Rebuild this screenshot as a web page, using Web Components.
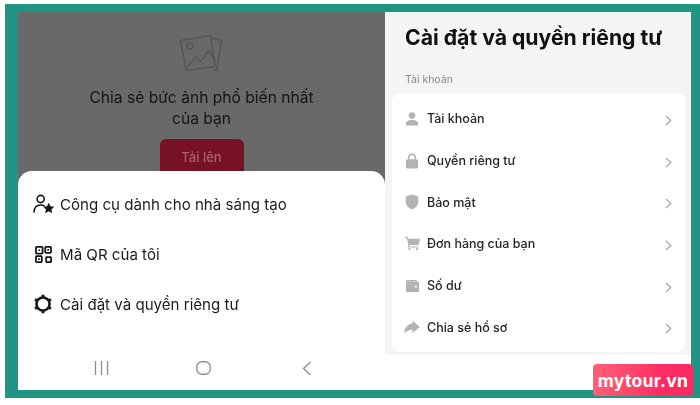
<!DOCTYPE html>
<html lang="vi">
<head>
<meta charset="utf-8">
<title>Cài đặt và quyền riêng tư</title>
<style>
    html, body { margin: 0; padding: 0; background: #fff; }
    body { width: 700px; height: 405px; overflow: hidden; font-family: Inter, "Noto Sans", sans-serif; }
</style>
</head>
<body>
<shot-frame>
    <upload-panel slot="left">
        <menu-row icon="creator">Công cụ dành cho nhà sáng tạo</menu-row>
        <menu-row icon="qr">Mã QR của tôi</menu-row>
        <menu-row icon="gear">Cài đặt và quyền riêng tư</menu-row>
    </upload-panel>
    <settings-panel slot="right" heading="Cài đặt và quyền riêng tư" label="Tài khoản">
        <settings-row icon="person">Tài khoản</settings-row>
        <settings-row icon="lock">Quyền riêng tư</settings-row>
        <settings-row icon="shield">Bảo mật</settings-row>
        <settings-row icon="cart">Đơn hàng của bạn</settings-row>
        <settings-row icon="wallet">Số dư</settings-row>
        <settings-row icon="share">Chia sẻ hồ sơ</settings-row>
    </settings-panel>
</shot-frame>
<brand-badge>mytour.vn</brand-badge>

<script>
const ICONS = {
    creator: `<svg width="22" height="22" viewBox="0 0 22 22" fill="none" stroke="#161616" stroke-width="1.6" stroke-linecap="round">
        <circle cx="8.700" cy="6" r="3.600"/>
        <path d="M2 19c.3-4.600 3-7 6.800-7 1.300 0 2.400.3 3.300.7"/>
        <path d="M16.700 9.700l1.700 3.600 3.800.5-2.800 2.600.8 3.800-3.500-1.900-3.500 1.900.8-3.800-2.800-2.600 3.800-.5z" fill="#161616" stroke="none"/>
    </svg>`,
    qr: `<svg width="17" height="17" viewBox="0 0 18 18" fill="none" stroke="#161616" stroke-width="1.900">
        <rect x="1" y="1" width="7" height="7" rx=".8"/>
        <rect x="10.800" y="1" width="6.200" height="6.200" rx=".8"/>
        <rect x="1" y="10.800" width="6.200" height="6.200" rx=".8"/>
        <rect x="11.800" y="11.800" width="5.200" height="5.200" rx=".6"/>
        <path d="M3.600 4.500h1.800M13 4.100h1.800M3.200 13.900h1.800" stroke-width="1.700"/>
    </svg>`,
    gear: `<svg width="20" height="20" viewBox="0 0 18 18" fill="none" stroke="#161616">
        <circle cx="9" cy="9" r="5.900" stroke-width="2.300"/>
        <path d="M9 .7v2.500M16.200 4.850l-2.200 1.250M16.200 13.150l-2.200-1.250M9 17.300v-2.500M1.800 13.150l2.200-1.250M1.800 4.850l2.200 1.250" stroke-width="2.500"/>
    </svg>`,
    person: `<svg width="14" height="14" viewBox="0 0 14 14" fill="#b3b3b3">
        <circle cx="7" cy="3.600" r="3.300"/>
        <path d="M.8 13.600v-1.800c0-2.400 2.800-3.800 6.200-3.800s6.200 1.400 6.200 3.800v1.800z"/>
    </svg>`,
    lock: `<svg width="14" height="16" viewBox="0 0 14 16" fill="#b3b3b3">
        <path d="M3 6.500V4.600a4 4 0 0 1 8 0v1.900H9.500V4.600a2.500 2.500 0 0 0-5 0v1.900z"/>
        <rect x="1" y="6.200" width="12" height="9.200" rx="1.600"/>
    </svg>`,
    shield: `<svg width="14" height="16" viewBox="0 0 14 16" fill="#b3b3b3">
        <path d="M7 .5l6.200 2.100v5.200c0 3.600-2.700 6.300-6.200 7.700C3.500 14.100.8 11.400.8 7.800V2.600z"/>
    </svg>`,
    cart: `<svg width="15" height="15" viewBox="0 0 16 15" fill="#b3b3b3">
        <path d="M0 .4h2.800l.5 2H16l-1.500 6.800H4.700l-.3 1.400h10v1.100H3l.6-2.800L1.900 1.500H0z"/>
        <circle cx="4.800" cy="13.500" r="1.200"/>
        <circle cx="12.800" cy="13.500" r="1.200"/>
    </svg>`,
    wallet: `<svg width="13" height="12" viewBox="0 0 13 12">
        <path d="M1.200 0h9.600v1.800H13V11a1 1 0 0 1-1 1H1a1 1 0 0 1-1-1V1.200A1.200 1.200 0 0 1 1.200 0z" fill="#b3b3b3"/>
        <rect x="1" y="1.200" width="9" height=".6" fill="#d8d8d8"/>
        <rect x="8.800" y="5.800" width="2.200" height="1.600" fill="#fff"/>
    </svg>`,
    share: `<svg width="16" height="14" viewBox="0 0 16 14" fill="#b3b3b3">
        <path d="M8.500.5L15.800 7 8.500 13.300V9.800C5 9.800 2.500 11 .2 13.500.5 8 3.800 4 8.500 3.600z"/>
    </svg>`
};

class ShotFrame extends HTMLElement {
    constructor() {
        super();
        this.attachShadow({ mode: "open" });
        this.shadowRoot.innerHTML = `
            <style>
                :host {
                    display: block;
                    box-sizing: border-box;
                    width: 695px;
                    height: 394px;
                    margin: 4px 0 0 5px;
                    padding: 8px 9px 8px 13px;
                    background: #209583;
                    filter: blur(.35px);
                }
                .panes {
                    display: grid;
                    grid-template-columns: 367px 306px;
                    height: 100%;
                    background: #fff;
                }
            </style>
            <div class="panes">
                <slot name="left"></slot>
                <slot name="right"></slot>
            </div>
        `;
    }
}

class UploadPanel extends HTMLElement {
    constructor() {
        super();
        this.attachShadow({ mode: "open" });
        this.shadowRoot.innerHTML = `
            <style>
                :host {
                    display: flex;
                    flex-direction: column;
                    height: 378px;
                    background: #696969;
                    overflow: hidden;
                }
                .empty {
                    height: 159px;
                    flex: none;
                    display: flex;
                    flex-direction: column;
                    align-items: center;
                    overflow: hidden;
                }
                svg.pic { margin-top: 22px; flex: none; }
                p {
                    margin: 15px 0 0;
                    font-size: 15.600px;
                    line-height: 21px;
                    text-align: center;
                    color: #151515;
                }
                .upload {
                    margin-top: 10px;
                    flex: none;
                    width: 84px;
                    height: 40px;
                    box-sizing: border-box;
                    padding-top: 10px;
                    border-radius: 6px;
                    background: #771225;
                    color: #a9616c;
                    font-size: 13px;
                    font-weight: 500;
                    text-align: center;
                }
                .sheet {
                    flex: 1;
                    display: flex;
                    flex-direction: column;
                    padding-top: 8px;
                    background: #fff;
                    border-radius: 14px 14px 0 0;
                }
                .rows { flex: 1; display: flex; flex-direction: column; }
                .nav {
                    flex: none;
                    display: grid;
                    grid-template-columns: 102px 106px 10px;
                    align-items: center;
                    height: 44px;
                    padding-left: 76px;
                }
                .nav svg { display: block; }
            </style>
            <div class="empty">
                <svg class="pic" width="46" height="38" viewBox="0 0 46 38" fill="none" stroke="#565656" stroke-width="1.500" stroke-linejoin="round" stroke-linecap="round">
                    <path d="M33 4.500l9.500 1.700-4.800 30-3-.4"/>
                    <path d="M1.500 6.500L31.500 1.500l4.600 31-27.600 3.800a1.500 1.500 0 0 1-1.700-1.200z"/>
                    <circle cx="11" cy="12" r="3"/>
                    <path d="M7.800 33.800l9-11 5 5 8-11 6 9"/>
                </svg>
                <p>Chia sẻ bức ảnh phổ biến nhất<br>của bạn</p>
                <div class="upload">Tải lên</div>
            </div>
            <div class="sheet">
                <div class="rows"><slot></slot></div>
                <div class="nav">
                    <svg width="15" height="14" viewBox="0 0 15 14" stroke="#8f8f8f" stroke-width="1.300"><path d="M1.500 0v14M7.500 0v14M13.500 0v14"/></svg>
                    <svg width="15" height="14" viewBox="0 0 15 14" fill="none" stroke="#8f8f8f" stroke-width="1.400"><rect x=".8" y=".8" width="13.400" height="12.400" rx="5"/></svg>
                    <svg width="10" height="15" viewBox="0 0 10 15" fill="none" stroke="#8f8f8f" stroke-width="1.400"><path d="M8.500 1L1.500 7.500l7 6.500"/></svg>
                </div>
            </div>
        `;
    }
}

class MenuRow extends HTMLElement {
    constructor() {
        super();
        this.attachShadow({ mode: "open" });
    }

    connectedCallback() {
        const icon = this.getAttribute("icon") || "";
        this.shadowRoot.innerHTML = `
            <style>
                :host {
                    display: grid;
                    grid-template-columns: 22px 1fr;
                    column-gap: 6px;
                    align-items: center;
                    height: 50px;
                    padding-left: 14px;
                    color: #1c1c1c;
                    font-size: 15.100px;
                }
                .icon { display: flex; justify-content: center; }
            </style>
            <span class="icon">${ICONS[icon] || ""}</span>
            <span><slot></slot></span>
        `;
    }
}

class SettingsPanel extends HTMLElement {
    constructor() {
        super();
        this.attachShadow({ mode: "open" });
    }

    connectedCallback() {
        const heading = this.getAttribute("heading") || "";
        const label = this.getAttribute("label") || "";
        this.shadowRoot.innerHTML = `
            <style>
                :host {
                    display: block;
                    box-sizing: border-box;
                    height: 343px;
                    padding: 9px 6px 0 7px;
                    background: #f4f4f5;
                }
                h1 {
                    margin: 0 0 0 13px;
                    font-size: 21.200px;
                    line-height: 32px;
                    font-weight: 700;
                    white-space: nowrap;
                    color: #111;
                }
                .label {
                    margin: 20px 0 0 13px;
                    font-size: 10.500px;
                    line-height: 14px;
                    color: #8b8b8b;
                }
                .card {
                    margin-top: 6px;
                    height: 259px;
                    box-sizing: border-box;
                    padding: 5px 0 0;
                    background: #fff;
                    border-radius: 8px;
                }
            </style>
            <h1>${heading}</h1>
            <div class="label">${label}</div>
            <div class="card"><slot></slot></div>
        `;
    }
}

class SettingsRow extends HTMLElement {
    constructor() {
        super();
        this.attachShadow({ mode: "open" });
    }

    connectedCallback() {
        const icon = this.getAttribute("icon") || "";
        this.shadowRoot.innerHTML = `
            <style>
                :host {
                    display: grid;
                    grid-template-columns: 16px 1fr 7px;
                    column-gap: 7px;
                    align-items: center;
                    height: 41.700px;
                    padding: 0 13px 0 12px;
                    color: #242424;
                    font-size: 12.500px;
                    font-weight: 500;
                }
                .icon { display: flex; justify-content: center; }
                svg { display: block; }
                .chevron { margin-top: 3px; }
            </style>
            <span class="icon">${ICONS[icon] || ""}</span>
            <span><slot></slot></span>
            <svg class="chevron" width="7" height="11" viewBox="0 0 7 11" fill="none" stroke="#a8a8a8" stroke-width="1.200"><path d="M1 1l4.800 4.500L1 10"/></svg>
        `;
    }
}

class BrandBadge extends HTMLElement {
    constructor() {
        super();
        this.attachShadow({ mode: "open" });
        this.shadowRoot.innerHTML = `
            <style>
                :host {
                    position: absolute;
                    left: 593px;
                    top: 364px;
                    width: 100px;
                    height: 32px;
                    display: flex;
                    align-items: center;
                    justify-content: center;
                    border-radius: 4px;
                    background: linear-gradient(90deg, #ff6075 0%, #ff2d63 70%, #fb2a60 100%);
                    color: #fff;
                    font-size: 17.500px;
                    font-weight: 700;
                    letter-spacing: .3px;
                }
            </style>
            <slot></slot>
        `;
    }
}

customElements.define("shot-frame", ShotFrame);
customElements.define("upload-panel", UploadPanel);
customElements.define("menu-row", MenuRow);
customElements.define("settings-panel", SettingsPanel);
customElements.define("settings-row", SettingsRow);
customElements.define("brand-badge", BrandBadge);
</script>
</body>
</html>
